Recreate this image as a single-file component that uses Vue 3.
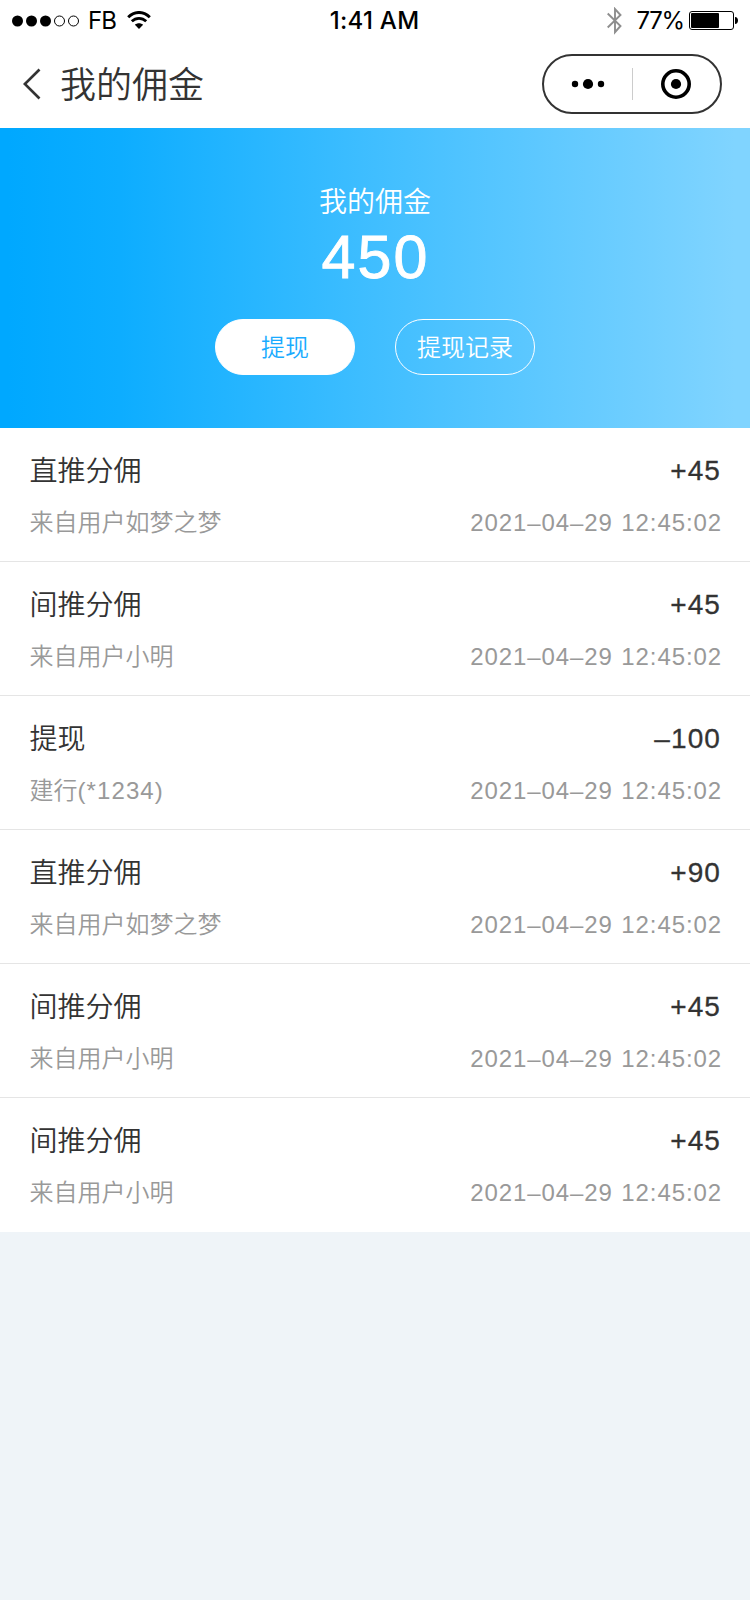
<template>
    <div class="page">
        <!-- Status bar -->
        <div class="status-bar">
            <div class="status-left">
                <svg class="signal" width="68" height="12" viewBox="0 0 68 12">
                    <circle v-for="n in 5" :key="'dot-' + n" :cx="5.5 + (n - 1) * 14" cy="6" :r="n > 3 ? 5 : 5.5"
                        :fill="n > 3 ? 'none' : '#000'" :stroke="n > 3 ? '#000' : 'none'" />
                </svg>
                <span class="carrier">FB</span>
                <svg class="wifi" width="24" height="18" viewBox="0 0 24 18">
                    <path d="M1.2 6.3C7.5 -.2 16.5 -.2 22.8 6.3" fill="none" stroke="#000" stroke-width="2.9" />
                    <path d="M4.8 10.3C9 6.3 15 6.3 19.2 10.3" fill="none" stroke="#000" stroke-width="2.8" />
                    <path d="M12 18L7.9 13.7C10.3 11.7 13.7 11.7 16.1 13.7Z" />
                </svg>
            </div>
            <div class="time">1:41 AM</div>
            <div class="status-right">
                <svg class="bluetooth" width="15" height="28" viewBox="0 0 15 28">
                    <path d="M.7 6.5L13.5 19L8 25.2V2L13.5 8L.7 20.5" fill="none" stroke="#8e8e8e"
                        stroke-width="1.9" />
                </svg>
                <span class="percent">77%</span>
                <svg class="battery" width="49" height="19" viewBox="0 0 49 19">
                    <rect x=".5" y=".5" width="44" height="18" rx="2.5" fill="none" stroke="#000" />
                    <rect x="2" y="2" width="28" height="15" rx="1" />
                    <path d="M46 6C50 6 50 13 46 13Z" />
                </svg>
            </div>
        </div>

        <!-- Navigation bar -->
        <div class="nav-bar">
            <svg class="back" width="18" height="32" viewBox="0 0 18 32">
                <path d="M16.5 1.5L1.8 16L16.5 30.5" fill="none" stroke="#333" stroke-width="2.7" />
            </svg>
            <div class="nav-title">我的佣金</div>
            <div class="capsule">
                <svg width="176" height="56" viewBox="0 0 176 56">
                    <circle cx="31" cy="28" r="3.2" />
                    <circle cx="44" cy="28" r="5.1" />
                    <circle cx="57" cy="28" r="3.2" />
                    <path d="M88.5 12V44" stroke="#ccc" />
                    <circle cx="132" cy="28" r="13.2" fill="none" stroke="#000" stroke-width="3.6" />
                    <circle cx="132" cy="28" r="5.1" />
                </svg>
            </div>
        </div>

        <!-- Balance -->
        <div class="balance">
            <div class="balance-label">我的佣金</div>
            <div class="balance-value">450</div>
            <div class="actions">
                <button class="btn btn-solid">提现</button>
                <button class="btn btn-line">提现记录</button>
            </div>
        </div>

        <!-- Records -->
        <div class="list">
            <div v-for="(item, index) in records" :key="'record-' + index" class="record">
                <div class="line">
                    <span class="record-title">{{ item.title }}</span>
                    <span class="amount">{{ item.amount }}</span>
                </div>
                <div class="line sub">
                    <span class="desc">{{ item.desc }}<span v-if="item.card" class="card">{{ item.card }}</span></span>
                    <span class="date">{{ item.date }}</span>
                </div>
            </div>
        </div>
    </div>
</template>

<script setup>
import { ref } from 'vue';

const date = '2021–04–29 12:45:02';

const records = ref([
    { title: '直推分佣', amount: '+45', desc: '来自用户如梦之梦', date },
    { title: '间推分佣', amount: '+45', desc: '来自用户小明', date },
    { title: '提现', amount: '–100', desc: '建行', card: '(*1234)', date },
    { title: '直推分佣', amount: '+90', desc: '来自用户如梦之梦', date },
    { title: '间推分佣', amount: '+45', desc: '来自用户小明', date },
    { title: '间推分佣', amount: '+45', desc: '来自用户小明', date },
]);
</script>

<style>
body {
    margin: 0;
    background: #eff4f8;
}
</style>

<style scoped>
.page {
    width: 750px;
    min-height: 1600px;
    background: #eff4f8;
    font-family: "Liberation Sans", "Noto Sans CJK SC", sans-serif;
    font-weight: 350;
    color: #333;
}

.status-bar {
    display: grid;
    grid-template-columns: 1fr auto 1fr;
    align-items: center;
    height: 41px;
    padding: 0 13px 0 12px;
    background: #fff;
    color: #000;
    font-family: Inter, sans-serif;
    font-size: 24px;
    font-weight: 400;
}

.status-left,
.status-right {
    display: flex;
    align-items: center;
}

.status-right {
    justify-content: flex-end;
    margin-right: -1px;
}

.carrier {
    margin: 0 11px 0 8px;
    letter-spacing: -1px;
}

.wifi {
    margin-bottom: 2px;
}

.time {
    font-weight: 450;
    letter-spacing: 0.3px;
}

.percent {
    margin: 0 5px 0 14px;
    letter-spacing: -1.2px;
}

.nav-bar {
    display: flex;
    align-items: center;
    box-sizing: border-box;
    height: 87px;
    padding: 0 28px 2px 23px;
    background: #fff;
}

.nav-title {
    flex: 1;
    margin-left: 19px;
    padding-top: 4px;
    font-size: 36px;
    line-height: 52px;
}

.capsule {
    width: 176px;
    height: 56px;
    border: 2px solid #333;
    border-radius: 30px;
}

.capsule svg {
    display: block;
}

.balance {
    display: flex;
    flex-direction: column;
    align-items: center;
    box-sizing: border-box;
    height: 300px;
    padding-top: 55px;
    background: linear-gradient(90deg, #00a8ff 1%, #0dadff 16%, #40beff 50%, #80d4ff 98%);
    color: #fff;
}

.balance-label {
    font-size: 28px;
    line-height: 40px;
}

.balance-value {
    padding-left: 1px;
    font-size: 61px;
    line-height: 68px;
    letter-spacing: 2px;
    -webkit-text-stroke: 0.9px #fff;
}

.actions {
    display: flex;
    gap: 40px;
    margin-top: 28px;
}

.btn {
    box-sizing: border-box;
    width: 140px;
    height: 56px;
    padding: 0 0 3px;
    border: 1px solid #fff;
    border-radius: 28px;
    background: none;
    color: #fff;
    font-family: inherit;
    font-size: 24px;
    font-weight: inherit;
}

.btn-solid {
    background: #fff;
    color: #1aabff;
}

.list {
    background: #fff;
}

.record {
    box-sizing: border-box;
    height: 134px;
    padding: 24px 28px 0 29.5px;
    border-bottom: 1px solid #e5e5e5;
}

.record:last-child {
    border-bottom: none;
}

.line {
    display: flex;
    justify-content: space-between;
    height: 40px;
    line-height: 40px;
    font-size: 28px;
}

.amount {
    margin: -1px 1px 0 0;
    letter-spacing: 1.1px;
    -webkit-text-stroke: 0.3px #333;
}

.sub {
    margin-top: 11px;
    color: #999;
    font-size: 24px;
}

.date {
    letter-spacing: 0.9px;
    word-spacing: 1px;
}

.card {
    letter-spacing: 1.1px;
}
</style>
